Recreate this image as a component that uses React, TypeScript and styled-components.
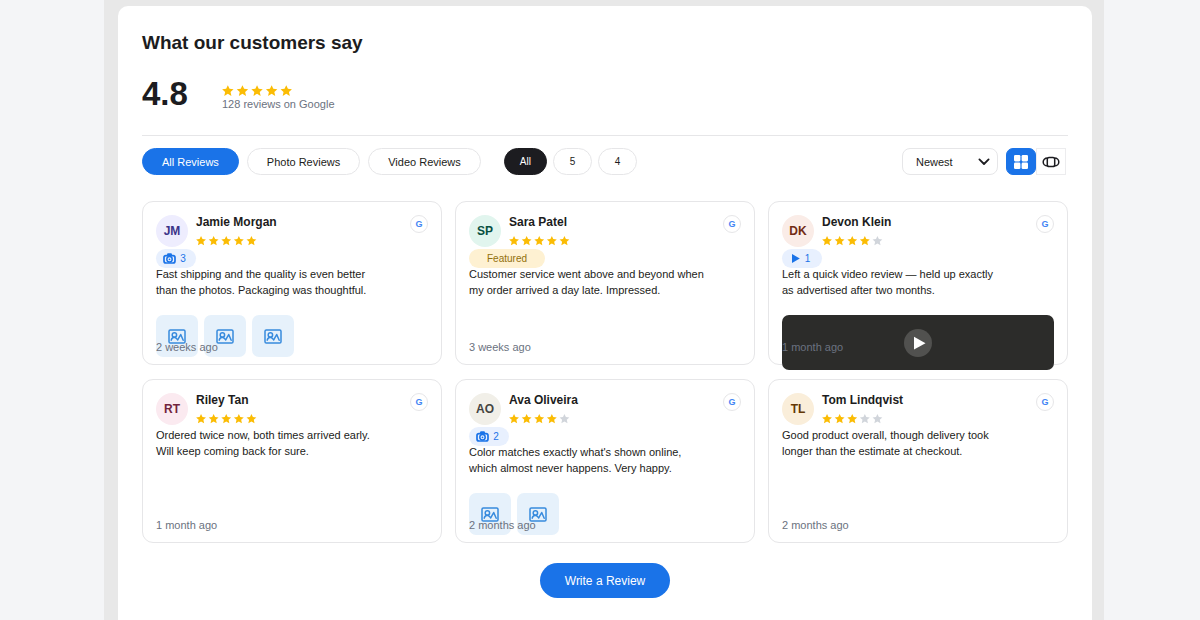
import React from "react";
import styled, { createGlobalStyle } from "styled-components";

const GlobalStyle = createGlobalStyle`
  *, *::before, *::after { box-sizing: border-box; }
  body {
    margin: 0;
    background: #f4f5f7;
    color: #1c1c20;
    font-family: "Liberation Sans", Arial, sans-serif;
    font-size: 11px;
  }
  button, select { font: inherit; color: inherit; }
  h1, h2, p { margin: 0; }
  svg { display: block; }
`;

const Page = styled.div`
  height: 100vh;
  overflow: hidden;
  padding: 0 96px 0 104px;
`;

const Frame = styled.main`
  min-height: 100%;
  padding: 6px 12px 0 14px;
  background: #e8e8e8;
`;

const Widget = styled.section`
  min-height: calc(100vh - 6px);
  padding: 25px 24px 24px;
  border-radius: 10px 10px 0 0;
  background: #fff;
`;

const Title = styled.h1`
  font-size: 19px;
  line-height: 24px;
`;

const Summary = styled.div`
  display: flex;
  align-items: center;
  height: 81px;
  padding-bottom: 2px;
  border-bottom: 1px solid #e6e6e8;
`;

const Score = styled.strong`
  width: 80px;
  font-size: 33px;
  line-height: 40px;
`;

const ScoreDetail = styled.div`
  display: flex;
  flex-direction: column;
  padding-top: 6px;
  color: #6b7280;
  line-height: 13px;
`;

const Toolbar = styled.div`
  display: flex;
  align-items: center;
  justify-content: space-between;
  padding: 12px 2px 26px 0;
`;

const Group = styled.div<{ $gap: number }>`
  display: flex;
  align-items: center;
  gap: ${(p) => p.$gap}px;
`;

const Pill = styled.button<{ $tone?: "blue" | "dark"; $small?: boolean }>`
  height: 27px;
  min-width: 39px;
  padding: 0 ${(p) => (p.$small ? 15 : 19)}px;
  border: 1px solid ${(p) => (p.$tone === "blue" ? "#1a73e8" : p.$tone === "dark" ? "#1c1c20" : "#e6e6e8")};
  border-radius: 14px;
  background: ${(p) => (p.$tone === "blue" ? "#1a73e8" : p.$tone === "dark" ? "#1c1c20" : "#fff")};
  color: ${(p) => (p.$tone ? "#fff" : "#1c1c20")};
  font-size: ${(p) => (p.$small ? 10 : 11)}px;
  white-space: nowrap;
`;

const SelectWrap = styled.label`
  position: relative;
  display: block;
  svg {
    position: absolute;
    top: 10px;
    right: 8px;
    pointer-events: none;
  }
`;

const SortSelect = styled.select`
  appearance: none;
  width: 96px;
  height: 27px;
  padding: 0 24px 0 13px;
  border: 1px solid #e6e6e8;
  border-radius: 8px;
  background: #fff;
`;

const ViewButton = styled.button<{ $active?: boolean }>`
  display: grid;
  place-items: center;
  width: 30px;
  height: 27px;
  padding: 0;
  border: 1px solid ${(p) => (p.$active ? "#1a73e8" : "#ececee")};
  border-radius: ${(p) => (p.$active ? 7 : 0)}px;
  background: ${(p) => (p.$active ? "#1a73e8" : "#fff")};
`;

const Grid = styled.div`
  display: grid;
  grid-template-columns: repeat(3, 1fr);
  grid-auto-rows: 164px;
  gap: 14px 13px;
`;

const Card = styled.article`
  position: relative;
  padding: 13px;
  border: 1px solid #e6e6e8;
  border-radius: 11px;
  background: #fff;
`;

const CardHead = styled.header`
  display: flex;
  gap: 8px;
  height: 32px;
`;

const Avatar = styled.div<{ $bg: string; $fg: string }>`
  display: grid;
  place-items: center;
  width: 32px;
  height: 32px;
  border-radius: 50%;
  background: ${(p) => p.$bg};
  color: ${(p) => p.$fg};
  font-size: 12px;
  font-weight: 700;
`;

const Who = styled.div`
  display: flex;
  flex: 1;
  flex-direction: column;
  gap: 4px;
`;

const Name = styled.h2`
  font-size: 12px;
  line-height: 15px;
`;

const Source = styled.span`
  display: grid;
  place-items: center;
  width: 18px;
  height: 18px;
  border: 1px solid #e6e6e8;
  border-radius: 50%;
  color: #4285f4;
  font-size: 9px;
  font-weight: 700;
`;

const Badge = styled.div<{ $featured?: boolean }>`
  display: flex;
  align-items: center;
  justify-content: center;
  gap: 4px;
  width: ${(p) => (p.$featured ? 76 : 40)}px;
  height: 19px;
  margin-top: 2px;
  padding-right: ${(p) => (p.$featured ? 0 : 3)}px;
  border-radius: 10px;
  background: ${(p) => (p.$featured ? "#fef1d2" : "#e8f0fe")};
  color: ${(p) => (p.$featured ? "#92700c" : "#1a73e8")};
  font-size: 10px;
`;

const Body = styled.p<{ $badged: boolean }>`
  margin-top: ${(p) => (p.$badged ? -2 : 2)}px;
  line-height: 16px;
  white-space: pre-line;
`;

const Thumbs = styled.div`
  display: flex;
  gap: 6px;
  margin-top: 17px;
`;

const Thumb = styled.div`
  display: grid;
  place-items: center;
  width: 42px;
  height: 42px;
  border-radius: 7px;
  background: #e6f1fb;
`;

const Video = styled.div`
  display: grid;
  place-items: center;
  height: 55px;
  margin-top: 17px;
  border-radius: 7px;
  background: #2c2c2a;
`;

const Time = styled.time`
  position: absolute;
  bottom: 10px;
  left: 13px;
  color: #6b7280;
  line-height: 13px;
`;

const Footer = styled.footer`
  display: flex;
  justify-content: center;
  padding-top: 20px;
`;

const WriteButton = styled.button`
  height: 35px;
  padding: 0 25px;
  border: 0;
  border-radius: 18px;
  background: #1a73e8;
  color: #fff;
  font-size: 12px;
`;

const STAR = "M8 1.7l2.300 5 5.500.6-4.100 3.700 1.200 5.400L8 13.600l-4.900 2.800 1.200-5.400L.2 7.300l5.500-.6z";

function Stars({ count, width }: { count: number; width: number }) {
  return (
    <svg width={width} height={Math.round(width / 5)} viewBox="0 0 100 20" role="img" aria-label={`${count} out of 5 stars`}>
      {[0, 1, 2, 3, 4].map((i) => (
        <path key={i} d={STAR} transform={`translate(${i * 20} 1)`} fill={i < count ? "#fbbc04" : "#d1d5db"} />
      ))}
    </svg>
  );
}

const Chevron = () => (
  <svg width="12" height="8" viewBox="0 0 12 8" fill="none" stroke="#1c1c20" strokeWidth="1.8" strokeLinecap="round" strokeLinejoin="round">
    <path d="M1.400 1.400L6 6l4.600-4.600" />
  </svg>
);

const GridIcon = () => (
  <svg width="14" height="14" viewBox="0 0 14 14" fill="#fff">
    <rect width="6.400" height="6.400" rx="1.300" />
    <rect x="7.600" width="6.400" height="6.400" rx="1.300" />
    <rect y="7.600" width="6.400" height="6.400" rx="1.300" />
    <rect x="7.600" y="7.600" width="6.400" height="6.400" rx="1.300" />
  </svg>
);

const CarouselIcon = () => (
  <svg width="18" height="12" viewBox="0 0 18 12" fill="none" stroke="#1c1c20" strokeWidth="1.500" strokeLinejoin="round">
    <rect x="5.300" y="1.500" width="7.400" height="9" rx="1.800" />
    <path d="M5.600 2C2.800 2 1.200 4 1.200 6s1.600 4 4.400 4M12.400 2c2.800 0 4.400 2 4.400 4s-1.600 4-4.400 4" />
  </svg>
);

const CameraIcon = () => (
  <svg width="13" height="11" viewBox="0 0 13 11" fill="none">
    <path d="M4 2.400V1.500Q4 .2 5.200.2h2.600Q9 .2 9 1.500v.9z" fill="#1a73e8" />
    <rect x="1" y="2.600" width="11" height="7.400" rx="2" stroke="#1a73e8" strokeWidth="1.700" />
    <circle cx="6.500" cy="6.300" r="2.700" stroke="#1a73e8" strokeWidth="1.500" />
    <circle cx="6.500" cy="6.300" r=".9" fill="#1a73e8" />
  </svg>
);

const PictureIcon = () => (
  <svg width="18" height="15" viewBox="0 0 18 15" fill="none" stroke="#378add" strokeWidth="1.500" strokeLinejoin="round" strokeLinecap="round">
    <rect x="1" y="1" width="16" height="13" rx="1.300" />
    <circle cx="6.400" cy="6" r="2.200" />
    <path d="M3.200 11.200c.4-1.900 1.600-2.900 3.200-3 1.500.1 2.300 1.600 3.300 2.700l3-5.400 2.500 5.700" />
  </svg>
);

const SmallPlay = () => (
  <svg width="10" height="9" viewBox="0 0 10 9" fill="#1a73e8">
    <path d="M1 0L8.800 4.500 1 9z" />
  </svg>
);

const PlayDisc = () => (
  <svg width="28" height="28" viewBox="0 0 28 28">
    <circle cx="14" cy="14" r="14" fill="#51514f" />
    <path d="M10 7.800v12.800L21.500 14.200z" fill="#fff" />
  </svg>
);

type Review = {
  initials: string;
  name: string;
  bg: string;
  fg: string;
  stars: number;
  text: string;
  when: string;
  photos?: number;
  videos?: number;
  featured?: boolean;
};

const REVIEWS: Review[] = [
  { initials: "JM", name: "Jamie Morgan", bg: "#eeedfe", fg: "#3c3489", stars: 5, photos: 3, when: "2 weeks ago", text: "Fast shipping and the quality is even better\nthan the photos. Packaging was thoughtful." },
  { initials: "SP", name: "Sara Patel", bg: "#e1f5ee", fg: "#085041", stars: 5, featured: true, when: "3 weeks ago", text: "Customer service went above and beyond when\nmy order arrived a day late. Impressed." },
  { initials: "DK", name: "Devon Klein", bg: "#faece7", fg: "#712b13", stars: 4, videos: 1, when: "1 month ago", text: "Left a quick video review — held up exactly\nas advertised after two months." },
  { initials: "RT", name: "Riley Tan", bg: "#fbeaf0", fg: "#72243e", stars: 5, when: "1 month ago", text: "Ordered twice now, both times arrived early.\nWill keep coming back for sure." },
  { initials: "AO", name: "Ava Oliveira", bg: "#f1efe8", fg: "#444441", stars: 4, photos: 2, when: "2 months ago", text: "Color matches exactly what's shown online,\nwhich almost never happens. Very happy." },
  { initials: "TL", name: "Tom Lindqvist", bg: "#faeeda", fg: "#633806", stars: 3, when: "2 months ago", text: "Good product overall, though delivery took\nlonger than the estimate at checkout." },
];

function ReviewCard({ review: r }: { review: Review }) {
  const badged = Boolean(r.photos || r.videos || r.featured);
  return (
    <Card>
      <CardHead>
        <Avatar $bg={r.bg} $fg={r.fg}>{r.initials}</Avatar>
        <Who>
          <Name>{r.name}</Name>
          <Stars count={r.stars} width={63} />
        </Who>
        <Source>G</Source>
      </CardHead>
      {r.featured && <Badge $featured>Featured</Badge>}
      {r.photos && <Badge><CameraIcon />{r.photos}</Badge>}
      {r.videos && <Badge><SmallPlay />{r.videos}</Badge>}
      <Body $badged={badged}>{r.text}</Body>
      {r.photos && (
        <Thumbs>
          {Array.from({ length: r.photos }, (_, i) => (
            <Thumb key={i}><PictureIcon /></Thumb>
          ))}
        </Thumbs>
      )}
      {r.videos && <Video><PlayDisc /></Video>}
      <Time>{r.when}</Time>
    </Card>
  );
}

export default function App() {
  return (
    <Page>
      <GlobalStyle />
      <Frame>
        <Widget>
          <Title>What our customers say</Title>
          <Summary>
            <Score>4.8</Score>
            <ScoreDetail>
              <Stars count={5} width={73} />
              <span>128 reviews on Google</span>
            </ScoreDetail>
          </Summary>
          <Toolbar>
            <Group $gap={23}>
              <Group $gap={8}>
                <Pill $tone="blue">All Reviews</Pill>
                <Pill>Photo Reviews</Pill>
                <Pill>Video Reviews</Pill>
              </Group>
              <Group $gap={6}>
                <Pill $small $tone="dark">All</Pill>
                <Pill $small>5</Pill>
                <Pill $small>4</Pill>
              </Group>
            </Group>
            <Group $gap={8}>
              <SelectWrap>
                <SortSelect aria-label="Sort reviews">
                  <option>Newest</option>
                </SortSelect>
                <Chevron />
              </SelectWrap>
              <Group $gap={0}>
                <ViewButton $active aria-label="Grid view"><GridIcon /></ViewButton>
                <ViewButton aria-label="Carousel view"><CarouselIcon /></ViewButton>
              </Group>
            </Group>
          </Toolbar>
          <Grid>
            {REVIEWS.map((r) => (
              <ReviewCard key={r.name} review={r} />
            ))}
          </Grid>
          <Footer>
            <WriteButton>Write a Review</WriteButton>
          </Footer>
        </Widget>
      </Frame>
    </Page>
  );
}
